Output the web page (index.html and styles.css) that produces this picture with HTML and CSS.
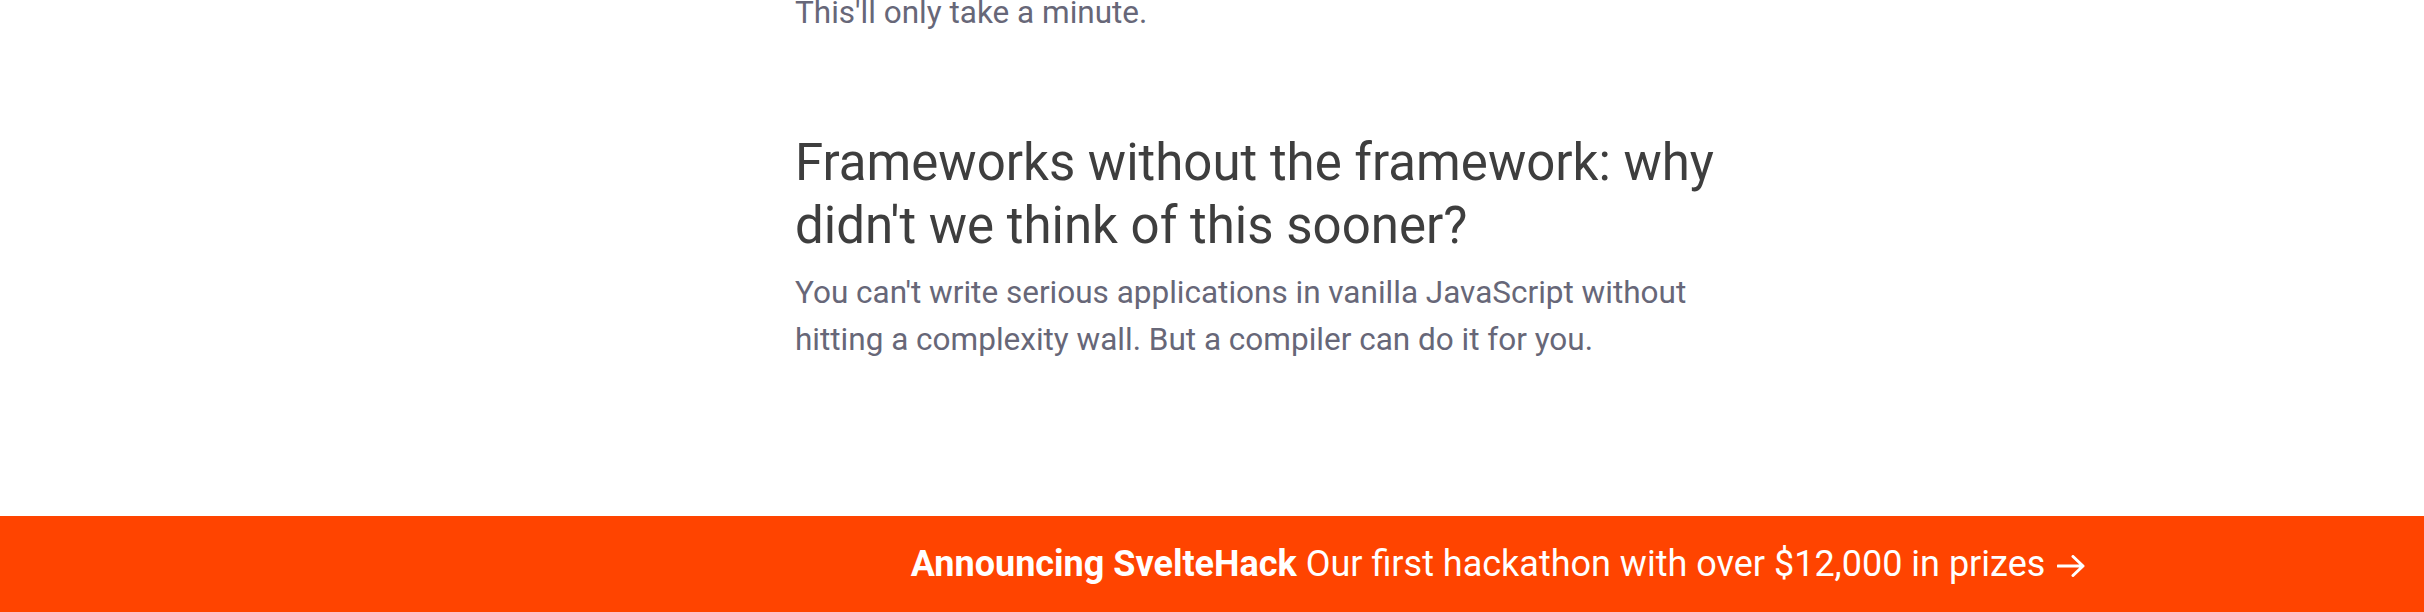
FILE: index.html
```html
<!DOCTYPE html>
<html lang="en">
<head>
<meta charset="utf-8">
<title>Svelte</title>
<link rel="stylesheet" href="styles.css">
</head>
<body>
<div class="page">
  <main class="content">
    <p class="lede lede-top">This'll only take a minute.</p>
    <article class="post">
      <h2 class="post-title">Frameworks without the framework: why didn't we think of this sooner?</h2>
      <p class="lede">You can't write serious applications in vanilla JavaScript without hitting a complexity wall. But a compiler can do it for you.</p>
    </article>
  </main>
  <a class="banner" href="#">
    <span class="banner-text"><strong>Announcing SvelteHack</strong> Our first hackathon with over $12,000 in prizes</span>
    <svg class="banner-arrow" width="28" height="22" viewBox="0 0 28 22" aria-hidden="true"><path d="M1 11H26M16 1.5L26 11L16 20.5" fill="none" stroke="#fff" stroke-width="3" stroke-linecap="round" stroke-linejoin="round"/></svg>
  </a>
</div>
</body>
</html>
```
FILE: styles.css
```css
html, body {
  margin: 0;
  padding: 0;
  background: #fff;
}
body {
  font-family: Roboto, "Liberation Sans", sans-serif;
  overflow: hidden;
}
.page {
  height: 612px;
  display: flex;
  flex-direction: column;
}
.content {
  padding-left: 795px;
  max-width: 980px;
}
.lede {
  margin: 0;
  font-size: 31.5px;
  line-height: 47px;
  color: #676778;
}
.lede-top {
  margin-top: -11px;
}
.post {
  margin-top: 95px;
}
.post-title {
  margin: 0 0 12px;
  font-size: 51px;
  line-height: 63px;
  font-weight: 400;
  color: #3e3e3e;
}
.banner {
  margin-top: auto;
  height: 96px;
  box-sizing: border-box;
  padding: 2px 0 0 572px;
  background: #ff4400;
  color: #fff;
  text-decoration: none;
  display: flex;
  align-items: center;
  justify-content: center;
  gap: 12px;
  font-size: 36px;
  line-height: 1.2;
}
.banner-text strong {
  font-weight: 700;
}
.banner-arrow {
  flex: none;
  margin-top: 2px;
}
```
